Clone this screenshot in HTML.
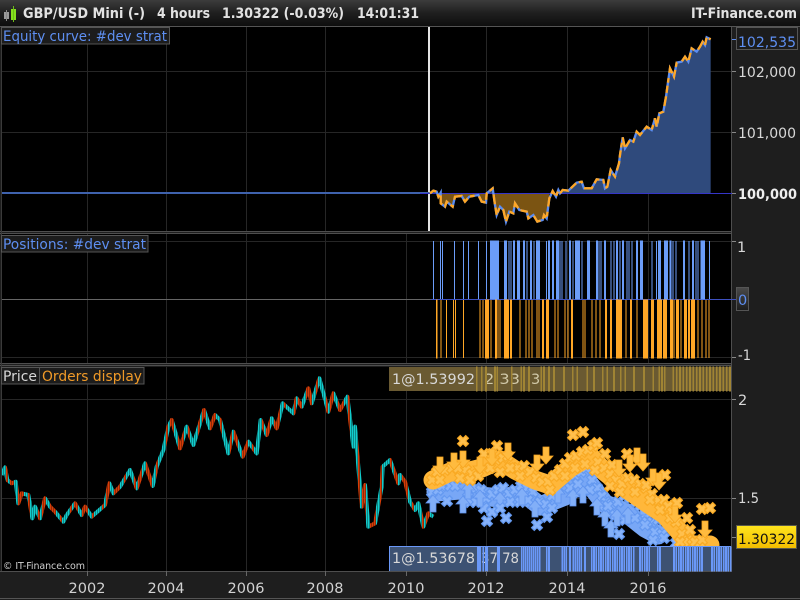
<!DOCTYPE html>
<html><head><meta charset="utf-8"><style>
html,body{margin:0;padding:0;background:#1e1e1e;overflow:hidden}
svg{display:block}
text{font-family:"DejaVu Sans","Liberation Sans",sans-serif}
</style></head><body>
<svg width="800" height="600" viewBox="0 0 800 600" xmlns="http://www.w3.org/2000/svg">
<defs>
<linearGradient id="top" x1="0" y1="0" x2="0" y2="1"><stop offset="0" stop-color="#3c3c3c"/><stop offset=".5" stop-color="#1f1f1f"/><stop offset="1" stop-color="#0e0e0e"/></linearGradient>
<linearGradient id="yel" x1="0" y1="0" x2="0" y2="1"><stop offset="0" stop-color="#ffe51e"/><stop offset="1" stop-color="#f2bd00"/></linearGradient>
<linearGradient id="zer" x1="0" y1="0" x2="0" y2="1"><stop offset="0" stop-color="#4a4a4a"/><stop offset="1" stop-color="#1c1c1c"/></linearGradient>
<clipPath id="above"><rect x="0" y="0" width="1140" height="580"/></clipPath>
<clipPath id="below"><rect x="0" y="580" width="1140" height="140"/></clipPath>
<clipPath id="p3"><rect x="2" y="367" width="729" height="204"/></clipPath>
<pattern id="cnd" patternUnits="userSpaceOnUse" width="96" height="20">
<path d="M0 0h5v20H0zM6 0h5v20H6zM12 0h5v20h-5zM24 0h5v20h-5zM42 0h5v20h-5zM48 0h5v20h-5zM72 0h5v20h-5zM78 0h5v20h-5zM90 0h5v20h-5z" fill="#12cccc"/>
<path d="M18 0h5v20h-5zM30 0h5v20h-5zM36 0h5v20h-5zM54 0h5v20h-5zM60 0h5v20h-5zM66 0h5v20h-5zM84 0h5v20h-5z" fill="#d83d08"/>
</pattern>
<g id="ox"><path d="M-4.500-4.500L4.500 4.500M4.500-4.500L-4.500 4.500" stroke="#f9aa24" stroke-width="5" fill="none"/><path d="M-3.500-3.500L3.500 3.500M3.500-3.500L-3.500 3.500" stroke="#ffc04d" stroke-width="3" fill="none"/></g>
<g id="bx"><path d="M-4.500-4.500L4.500 4.500M4.500-4.500L-4.500 4.500" stroke="#6499f0" stroke-width="5" fill="none"/><path d="M-3.500-3.500L3.500 3.500M3.500-3.500L-3.500 3.500" stroke="#86b2fa" stroke-width="3" fill="none"/></g>
<path id="od" d="M-3-9h6v9h4l-7 8-7-8h4z" fill="#ffbb3f" stroke="#f7a51f" stroke-width=".8"/>
<path id="bu" d="M-3 9h6v-9h4l-7-8-7 8h4z" fill="#82aff8" stroke="#5f93ee" stroke-width=".8"/>
<path id="pr" fill="none" stroke-linejoin="round" d="M5 345L15 322L22 360L35 370L47 365L55 430L65 400L85 405L97 475L105 440L120 475L135 415L150 440L165 455L190 485L200 465L225 430L245 465L255 440L275 470L315 435L328 370L340 400L360 380L390 330L410 385L435 310L458 378L470 320L490 270L505 200L515 180L540 265L560 200L580 255L612 150L630 205L645 165L660 180L685 280L700 215L728 290L745 245L770 280L782 180L800 225L815 175L830 205L848 130L880 160L890 115L905 140L925 85L935 130L958 55L985 155L1000 100L1020 150L1042 110L1060 260L1065 200L1085 440L1095 375L1105 500L1125 490L1145 380L1148 320L1170 300L1195 370L1200 345L1215 365L1230 425L1245 450L1255 430L1270 500L1285 460L1300 470"/>
</defs>

<rect width="800" height="600" fill="#1e1e1e"/>
<rect width="800" height="26" fill="url(#top)"/>
<rect y="26" width="800" height="1" fill="#555"/>

<!-- panels -->
<rect x="2" y="27" width="729" height="204" fill="#000"/>
<rect x="2" y="234" width="729" height="129" fill="#000"/>
<rect x="2" y="367" width="729" height="204" fill="#000"/>
<path d="M0 231.500H732M0 233.500H732M0 363.500H732M0 365.500H732M0 571.500H732M731.500 27V572" stroke="#4e4e4e" fill="none"/>
<path d="M1.500 27V571" stroke="#3a3a3a"/>

<!-- grid -->
<path d="M87.500 27V231M166.500 27V231M246.500 27V231M325.500 27V231M486.500 27V231M567.500 27V231M648.500 27V231
M87.500 234V363M166.500 234V363M246.500 234V363M325.500 234V363M406.500 234V363M486.500 234V363M567.500 234V363M648.500 234V363
M87.500 367V571M166.500 367V571M246.500 367V571M325.500 367V571M406.500 367V571M486.500 367V571M567.500 367V571M648.500 367V571
M2 71.500H731M2 132.500H731M2 241.500H731M2 357.500H731M2 399.500H731M2 498.500H731" stroke="#262626" fill="none"/>

<!-- white line -->
<rect x="428" y="27" width="2" height="204" fill="#e4e4e4"/>

<!-- equity -->
<rect x="2" y="192" width="428" height="2" fill="#3f62ad"/>
<g transform="translate(420 0) scale(.33333)">
<path clip-path="url(#above)" d="M30 580L40 572L50 575L55 590L62 578L62 610L75 620L80 605L98 620L105 590L125 588L135 605L148 590L175 585L185 605L198 608L200 580L218 565L225 615L230 645L240 620L250 630L258 665L268 635L280 640L285 610L298 630L320 635L325 655L340 645L352 665L368 660L372 645L380 655L388 595L398 573L408 590L415 570L420 580L428 570L445 572L470 548L485 545L492 565L515 565L530 538L550 540L555 565L562 560L572 510L585 530L597 490L600 465L608 412L615 445L630 420L640 425L650 395L660 405L680 380L695 390L705 355L710 380L718 340L730 335L738 290L745 240L750 205L762 230L770 188L785 185L795 170L805 185L815 145L830 155L840 140L848 125L855 135L860 112L872 118V580Z" fill="#2f4a7c"/>
<path clip-path="url(#below)" d="M30 580L40 572L50 575L55 590L62 578L62 610L75 620L80 605L98 620L105 590L125 588L135 605L148 590L175 585L185 605L198 608L200 580L218 565L225 615L230 645L240 620L250 630L258 665L268 635L280 640L285 610L298 630L320 635L325 655L340 645L352 665L368 660L372 645L380 655L388 595V580Z" fill="#7b5412"/>
<path d="M0 580.500H945" stroke="#3535c8" stroke-width="3" fill="none"/>
<path d="M30 580L40 572L50 575L55 590L62 578L62 610L75 620L80 605L98 620L105 590L125 588L135 605L148 590L175 585L185 605L198 608L200 580L218 565L225 615L230 645L240 620L250 630L258 665L268 635L280 640L285 610L298 630L320 635L325 655L340 645L352 665L368 660L372 645L380 655L388 595L398 573L408 590L415 570L420 580L428 570L445 572L470 548L485 545L492 565L515 565L530 538L550 540L555 565L562 560L572 510L585 530L597 490L600 465L608 412L615 445L630 420L640 425L650 395L660 405L680 380L695 390L705 355L710 380L718 340L730 335L738 290L745 240L750 205L762 230L770 188L785 185L795 170L805 185L815 145L830 155L840 140L848 125L855 135L860 112L872 118" fill="none" stroke="#5a8cf0" stroke-width="7"/>
<path d="M30 580L40 572L50 575L55 590L62 578L62 610L75 620L80 605L98 620L105 590L125 588L135 605L148 590L175 585L185 605L198 608L200 580L218 565L225 615L230 645L240 620L250 630L258 665L268 635L280 640L285 610L298 630L320 635L325 655L340 645L352 665L368 660L372 645L380 655L388 595L398 573L408 590L415 570L420 580L428 570L445 572L470 548L485 545L492 565L515 565L530 538L550 540L555 565L562 560L572 510L585 530L597 490L600 465L608 412L615 445L630 420L640 425L650 395L660 405L680 380L695 390L705 355L710 380L718 340L730 335L738 290L745 240L750 205L762 230L770 188L785 185L795 170L805 185L815 145L830 155L840 140L848 125L855 135L860 112L872 118" fill="none" stroke="#ffa726" stroke-width="7" stroke-dasharray="22 9 14 16 30 10"/>
</g>

<!-- positions -->
<rect x="2" y="299" width="429" height="1" fill="#666"/>
<rect x="431" y="299" width="305" height="1" fill="#3d50c0"/>
<g transform="translate(420 230) scale(.33333)" shape-rendering="crispEdges">
<path fill="#6b9cf8" stroke="#6b9cf8" stroke-width="3" d="M40 33V207M61 33V207M67 33V207M103 33V207M130 33V207M145 33V207M175 33V207M199 33V207M211 33H236V207H211ZM253 33H260V207H253ZM267 33V207M273 33V207M280 33H284V207H280ZM292 33H299V207H292ZM310 33H314V207H310ZM321 33V207M331 33H335V207H331ZM342 33V207M349 33H359V207H349ZM379 33V207M385 33H389V207H385ZM397 33H401V207H397ZM409 33H416V207H409ZM420 33V207M426 33V207M438 33V207M448 33H452V207H448ZM459 33V207M466 33H479V207H466ZM486 33V207M502 33H509V207H502ZM529 33H533V207H529ZM537 33V207M543 33V207M553 33H557V207H553ZM573 33V207M582 33V207M589 33H593V207H589ZM600 33V207M607 33H611V207H607ZM621 33V207M627 33V207M636 33V207M649 33H653V207H649ZM661 33H668V207H661ZM696 33V207M709 33V207M715 33H722V207H715ZM733 33H743V207H733ZM750 33H753V207H750ZM759 33V207M768 33V207M790 33H794V207H790ZM807 33V207M817 33H821V207H817ZM828 33V207M834 33V207M843 33H853V207H843ZM868 33V207"/>
<path fill="#ffa726" stroke="#ffa726" stroke-width="3" d="M49 210H51V384H49ZM63 210V384M79 210V384M100 210V384M106 210V384M130 210V384M180 210V384M189 210V384M196 210H206V384H196ZM213 210V384M226 210H230V384H226ZM234 210V384M240 210V384M253 210H266V384H253ZM271 210H275V384H271ZM300 210V384M318 210V384M327 210V384M336 210V384M351 210V384M357 210V384M367 210H371V384H367ZM379 210H386V384H379ZM405 210V384M414 210V384M435 210V384M444 210V384M454 210H458V384H454ZM489 210V384M495 210V384M516 210V384M528 210V384M540 210V384M556 210H560V384H556ZM571 210H575V384H571ZM589 210H605V384H589ZM618 210V384M631 210H635V384H631ZM651 210V384M670 210H683V384H670ZM694 210H701V384H694ZM712 210H725V384H712ZM730 210H740V384H730ZM751 210H758V384H751ZM762 210V384M769 210H776V384H769ZM783 210V384M793 210H800V384H793ZM805 210H809V384H805ZM814 210H824V384H814ZM834 210V384M846 210V384M858 210V384M867 210V384"/>
</g>

<g clip-path="url(#p3)">
<!-- price -->
<g transform="translate(0 360) scale(.33333)">
<use href="#pr" stroke="url(#cnd)" stroke-width="12"/>
</g>
<!-- markers, group origin 400,430 -->
<g transform="translate(400 430)">
<path d="M36 62L60 60L80 66L100 68L125 64L140 76L165 66L185 48L205 74L225 82L245 98L258 105" fill="none" stroke="#78a7f6" stroke-width="19" stroke-linejoin="round" stroke-linecap="round"/>
<use href="#bx" x="32" y="62"/><use href="#bx" x="38" y="60"/><use href="#bx" x="42" y="56"/><use href="#bx" x="50" y="56"/><use href="#bx" x="55" y="56"/><use href="#bx" x="63" y="49"/><use href="#bx" x="68" y="62"/><use href="#bx" x="76" y="58"/><use href="#bx" x="81" y="60"/><use href="#bx" x="86" y="68"/><use href="#bx" x="92" y="64"/><use href="#bx" x="98" y="60"/><use href="#bx" x="103" y="58"/><use href="#bx" x="109" y="64"/><use href="#bx" x="115" y="60"/><use href="#bx" x="121" y="56"/><use href="#bx" x="127" y="58"/><use href="#bx" x="133" y="62"/><use href="#bx" x="140" y="72"/><use href="#bx" x="146" y="74"/><use href="#bx" x="152" y="66"/><use href="#bx" x="158" y="58"/><use href="#bx" x="165" y="52"/><use href="#bx" x="170" y="46"/><use href="#bx" x="175" y="45"/><use href="#bx" x="181" y="42"/><use href="#bx" x="186" y="38"/><use href="#bx" x="192" y="50"/><use href="#bx" x="197" y="58"/><use href="#bx" x="202" y="66"/><use href="#bx" x="206" y="72"/><use href="#bx" x="212" y="74"/><use href="#bx" x="218" y="72"/><use href="#bx" x="224" y="66"/><use href="#bx" x="230" y="68"/><use href="#bx" x="236" y="72"/><use href="#bx" x="240" y="76"/><use href="#bx" x="246" y="84"/><use href="#bx" x="252" y="92"/><use href="#bx" x="258" y="90"/><use href="#bx" x="263" y="88"/><use href="#bx" x="247" y="92"/>
<use href="#bx" x="70" y="72"/><use href="#bx" x="76" y="72"/><use href="#bx" x="84" y="78"/><use href="#bx" x="110" y="72"/><use href="#bx" x="120" y="72"/><use href="#bx" x="128" y="70"/><use href="#bx" x="170" y="58"/><use href="#bx" x="178" y="54"/><use href="#bx" x="190" y="60"/><use href="#bx" x="200" y="76"/><use href="#bx" x="215" y="85"/><use href="#bx" x="225" y="90"/><use href="#bx" x="235" y="88"/><use href="#bx" x="245" y="95"/><use href="#bx" x="255" y="102"/><use href="#bx" x="262" y="104"/>
<use href="#bu" x="33" y="73"/><use href="#bu" x="63" y="74"/><use href="#bu" x="68" y="60"/><use href="#bu" x="80" y="68"/><use href="#bu" x="135" y="78"/><use href="#bu" x="173" y="67"/><use href="#bu" x="183" y="64"/><use href="#bu" x="197" y="76"/><use href="#bu" x="205" y="87"/><use href="#bu" x="211" y="98"/><use href="#bu" x="217" y="87"/><use href="#bu" x="228" y="85"/><use href="#bu" x="243" y="76"/><use href="#bu" x="100" y="70"/><use href="#bu" x="122" y="66"/><use href="#bu" x="158" y="64"/>
<use href="#bx" x="47" y="71"/><use href="#bx" x="87" y="91"/><use href="#bx" x="106" y="88"/><use href="#bx" x="92" y="82"/><use href="#bx" x="100" y="78"/><use href="#bx" x="137" y="95"/><use href="#bx" x="147" y="87"/><use href="#bx" x="152" y="78"/><use href="#bx" x="219" y="104"/><use href="#bx" x="253" y="110"/><use href="#bx" x="264" y="108"/><use href="#bx" x="276" y="113"/><use href="#bx" x="208" y="76"/>

<path d="M33 50L50 42L66 42L82 38L100 30L115 40L135 50L150 55L170 38L190 26L205 42L225 58L250 75L265 85L278 100L290 115L310 115" fill="none" stroke="#ffb73a" stroke-width="19" stroke-linejoin="round" stroke-linecap="round"/>
<use href="#ox" x="32" y="50"/><use href="#ox" x="37" y="42"/><use href="#ox" x="45" y="40"/><use href="#ox" x="52" y="38"/><use href="#ox" x="58" y="38"/><use href="#ox" x="66" y="40"/><use href="#ox" x="72" y="44"/><use href="#ox" x="78" y="46"/><use href="#ox" x="84" y="24"/><use href="#ox" x="92" y="24"/><use href="#ox" x="97" y="16"/><use href="#ox" x="90" y="38"/><use href="#ox" x="96" y="30"/><use href="#ox" x="103" y="28"/><use href="#ox" x="108" y="26"/><use href="#ox" x="112" y="38"/><use href="#ox" x="118" y="38"/><use href="#ox" x="124" y="36"/><use href="#ox" x="130" y="42"/><use href="#ox" x="136" y="48"/><use href="#ox" x="142" y="52"/><use href="#ox" x="148" y="52"/><use href="#ox" x="154" y="46"/><use href="#ox" x="160" y="40"/><use href="#ox" x="165" y="34"/><use href="#ox" x="170" y="28"/><use href="#ox" x="176" y="26"/><use href="#ox" x="182" y="22"/><use href="#ox" x="188" y="20"/><use href="#ox" x="193" y="16"/><use href="#ox" x="198" y="32"/><use href="#ox" x="204" y="38"/><use href="#ox" x="210" y="44"/><use href="#ox" x="216" y="50"/><use href="#ox" x="222" y="54"/><use href="#ox" x="228" y="48"/><use href="#ox" x="234" y="50"/><use href="#ox" x="240" y="54"/><use href="#ox" x="246" y="58"/><use href="#ox" x="252" y="64"/><use href="#ox" x="258" y="70"/><use href="#ox" x="264" y="70"/><use href="#ox" x="268" y="76"/><use href="#ox" x="272" y="82"/><use href="#ox" x="276" y="92"/><use href="#ox" x="282" y="104"/><use href="#ox" x="288" y="110"/><use href="#ox" x="295" y="112"/><use href="#ox" x="302" y="110"/><use href="#ox" x="284" y="112"/>
<use href="#ox" x="40" y="50"/><use href="#ox" x="60" y="48"/><use href="#ox" x="70" y="50"/><use href="#ox" x="100" y="42"/><use href="#ox" x="110" y="38"/><use href="#ox" x="120" y="46"/><use href="#ox" x="150" y="60"/><use href="#ox" x="165" y="46"/><use href="#ox" x="175" y="38"/><use href="#ox" x="185" y="34"/><use href="#ox" x="195" y="40"/><use href="#ox" x="210" y="56"/><use href="#ox" x="220" y="62"/><use href="#ox" x="235" y="62"/><use href="#ox" x="250" y="70"/><use href="#ox" x="260" y="80"/><use href="#ox" x="270" y="88"/><use href="#ox" x="280" y="112"/><use href="#ox" x="300" y="118"/><use href="#ox" x="290" y="100"/>
<use href="#ox" x="63" y="11"/><use href="#ox" x="173" y="5"/><use href="#ox" x="183" y="2"/><use href="#ox" x="197" y="13"/><use href="#ox" x="205" y="24"/><use href="#ox" x="212" y="35"/><use href="#ox" x="227" y="24"/><use href="#ox" x="265" y="45"/><use href="#ox" x="277" y="73"/><use href="#ox" x="287" y="88"/><use href="#ox" x="302" y="79"/><use href="#ox" x="310" y="78"/><use href="#ox" x="246" y="55"/>
<use href="#od" x="63" y="30"/><use href="#od" x="146" y="26"/><use href="#od" x="137" y="34"/><use href="#od" x="80" y="36"/><use href="#od" x="237" y="27"/><use href="#od" x="243" y="33"/><use href="#od" x="219" y="39"/><use href="#od" x="253" y="48"/><use href="#od" x="259" y="52"/><use href="#od" x="40" y="36"/><use href="#od" x="54" y="32"/><use href="#od" x="108" y="22"/><use href="#od" x="305" y="100"/><use href="#od" x="275" y="85"/><use href="#od" x="92" y="28"/><use href="#od" x="230" y="34"/>
</g>
</g>

<!-- tags -->
<g shape-rendering="crispEdges">
<rect x="389" y="367" width="342" height="24" fill="#6a5a32"/>
</g>
<g font-size="14.500" fill="#d0c8a8">
<text x="484" y="384" textLength="36" lengthAdjust="spacingAndGlyphs">2 33</text>
<text x="531" y="384">3</text>
</g>
<g shape-rendering="crispEdges">
<g transform="translate(380 360) scale(.33333)">
<path d="M290 20V95M305 20V95M318 20V95M345 20V95M352 20V95M395 20V95M424 20V95M432 20V95M447 20V95M484 20V95M492 20V95M507 20V95M522 20V95M552 20V95M578 20V95M592 20V95M622 20V95M642 20V95M668 20V95M682 20V95M702 20V95M722 20V95M736 20V95M762 20V95M792 20V95M820 20V95M838 20V95M846 20V95M854 20V95M880 20V95M890 20V95M900 20V95M910 20V95M920 20V95M930 20V95M940 20V95M950 20V95M960 20V95M970 20V95M980 20V95M990 20V95M1000 20V95M1010 20V95M1020 20V95M1030 20V95M1040 20V95M1050 20V95" stroke="#a08434" stroke-width="5"/>
</g>
<rect x="389" y="546" width="342" height="25" fill="#3d5273"/>
</g>
<text x="481" y="563" font-size="14.500" fill="#d8d8d8" textLength="38" lengthAdjust="spacingAndGlyphs">37 78</text>
<g shape-rendering="crispEdges">
<g transform="translate(470 540) scale(.33333)">
<path d="M24 20V95M30 20V95M40 20V95M47 20V95M52 20V95M84 20V95M88 20V95M155 20V95M161 20V95M167 20V95M173 20V95M179 20V95M185 20V95M191 20V95M197 20V95M203 20V95M209 20V95M230 20V95M237 20V95M277 20V95M283 20V95M289 20V95M300 20V95M310 20V95M316 20V95M322 20V95M328 20V95M334 20V95M345 20V95M365 20V95M372 20V95M379 20V95M386 20V95M393 20V95M400 20V95M407 20V95M414 20V95M421 20V95M428 20V95M435 20V95M442 20V95M449 20V95M456 20V95M463 20V95M470 20V95M477 20V95M484 20V95M491 20V95M510 20V95M517 20V95M524 20V95M531 20V95M538 20V95M563 20V95M570 20V95M612 20V95M619 20V95M626 20V95M633 20V95M640 20V95M647 20V95M654 20V95M661 20V95M668 20V95M675 20V95M682 20V95M689 20V95M696 20V95M726 20V95M733 20V95M740 20V95M747 20V95M754 20V95M761 20V95M768 20V95M775 20V95M782 20V95" stroke="#6a98f8" stroke-width="5"/>
</g>
<rect x="389" y="546" width="342" height="1" fill="#6a98f8"/>
<rect x="730" y="546" width="1" height="25" fill="#6a98f8"/>
<rect x="389" y="546" width="1" height="25" fill="#6a98f8"/>
</g>
<text x="392" y="384" font-size="14.500" fill="#d8d8d8" textLength="83" lengthAdjust="spacingAndGlyphs">1@1.53992</text>
<text x="392" y="563" font-size="14.500" fill="#d8d8d8" textLength="83" lengthAdjust="spacingAndGlyphs">1@1.53678</text>

<!-- left labels -->
<g>
<rect x="1.500" y="27.500" width="168" height="16.500" fill="#1c1c1c" stroke="#555"/>
<text x="3" y="41" font-size="14" fill="#5e8ff2" textLength="164" lengthAdjust="spacingAndGlyphs">Equity curve: #dev strat</text>
<rect x="1.500" y="235.500" width="146.500" height="16.500" fill="#1c1c1c" stroke="#555"/>
<text x="3" y="249" font-size="14" fill="#5e8ff2" textLength="143" lengthAdjust="spacingAndGlyphs">Positions: #dev strat</text>
<rect x="1.500" y="367.500" width="38" height="16.500" fill="#1c1c1c" stroke="#555"/>
<text x="3" y="381" font-size="14" fill="#d8d8d8" textLength="34" lengthAdjust="spacingAndGlyphs">Price</text>
<rect x="39.500" y="367.500" width="104.500" height="16.500" fill="#1c1c1c" stroke="#555"/>
<text x="42" y="381" font-size="14" fill="#f09a28" textLength="100" lengthAdjust="spacingAndGlyphs">Orders display</text>
</g>
<text x="3" y="569" font-size="9.500" fill="#d0d0d0" textLength="82" lengthAdjust="spacing">© IT-Finance.com</text>

<!-- top bar -->
<rect x="4" y="12" width="5" height="7" fill="#9a9a9a"/><rect x="6" y="10" width="1" height="11" fill="#888"/>
<rect x="11" y="9" width="5" height="11" fill="#86e01e"/><rect x="13" y="6" width="1" height="16" fill="#6cbe16"/>
<g font-size="14" font-weight="bold" fill="#e2e2e2">
<text x="23" y="18" textLength="122" lengthAdjust="spacingAndGlyphs">GBP/USD Mini (-)</text>
<text x="157" y="18" textLength="53" lengthAdjust="spacingAndGlyphs">4 hours</text>
<text x="222" y="18" textLength="122" lengthAdjust="spacingAndGlyphs">1.30322 (-0.03%)</text>
<text x="357" y="18" textLength="62" lengthAdjust="spacingAndGlyphs">14:01:31</text>
<text x="691" y="18" textLength="106" lengthAdjust="spacingAndGlyphs">IT-Finance.com</text>
</g>

<!-- right axis -->
<path d="M732 71.500H736M732 132.500H736M732 193.500H736M732 241.500H736M732 357.500H736M732 399.500H736M732 498.500H736M732 537.500H736" stroke="#888" fill="none"/>
<path d="M732 39.500H736" stroke="#5a8cf0"/>
<rect x="736.500" y="27.500" width="61" height="22" fill="#1c1c1c" stroke="#555"/>
<g font-size="14.500" fill="#d8d8d8">
<text x="738" y="47" fill="#5e8ff2" textLength="58" lengthAdjust="spacingAndGlyphs">102,535</text>
<text x="738" y="77" textLength="58" lengthAdjust="spacingAndGlyphs">102,000</text>
<text x="738" y="138" textLength="58" lengthAdjust="spacingAndGlyphs">101,000</text>
<text x="738" y="199" font-weight="bold" fill="#eee" textLength="59" lengthAdjust="spacingAndGlyphs">100,000</text>
<text x="737" y="252">1</text>
<text x="738" y="360" textLength="13" lengthAdjust="spacingAndGlyphs">-1</text>
<text x="738" y="405">2</text>
<text x="738" y="503" textLength="21" lengthAdjust="spacingAndGlyphs">1.5</text>
</g>
<rect x="736.500" y="287.500" width="12" height="23" fill="url(#zer)" stroke="#555"/>
<text x="738" y="305" font-size="14.500" fill="#5e8ff2">0</text>
<rect x="736.500" y="525.500" width="60" height="23" fill="url(#yel)" stroke="#5a5a4a"/>
<text x="738" y="544" font-size="14.500" fill="#111" textLength="57" lengthAdjust="spacingAndGlyphs">1.30322</text>

<!-- x axis -->
<path d="M87.500 571V576M166.500 571V576M246.500 571V576M325.500 571V576M406.500 571V576M486.500 571V576M567.500 571V576M648.500 571V576" stroke="#666"/>
<g font-size="14.500" fill="#d2d2d2" text-anchor="middle">
<text x="87" y="593">2002</text><text x="166" y="593">2004</text><text x="246" y="593">2006</text><text x="325" y="593">2008</text><text x="406" y="593">2010</text><text x="486" y="593">2012</text><text x="567" y="593">2014</text><text x="648" y="593">2016</text>
</g>
<path d="M0 598.500H800" stroke="#555"/>
</svg>
</body></html>
